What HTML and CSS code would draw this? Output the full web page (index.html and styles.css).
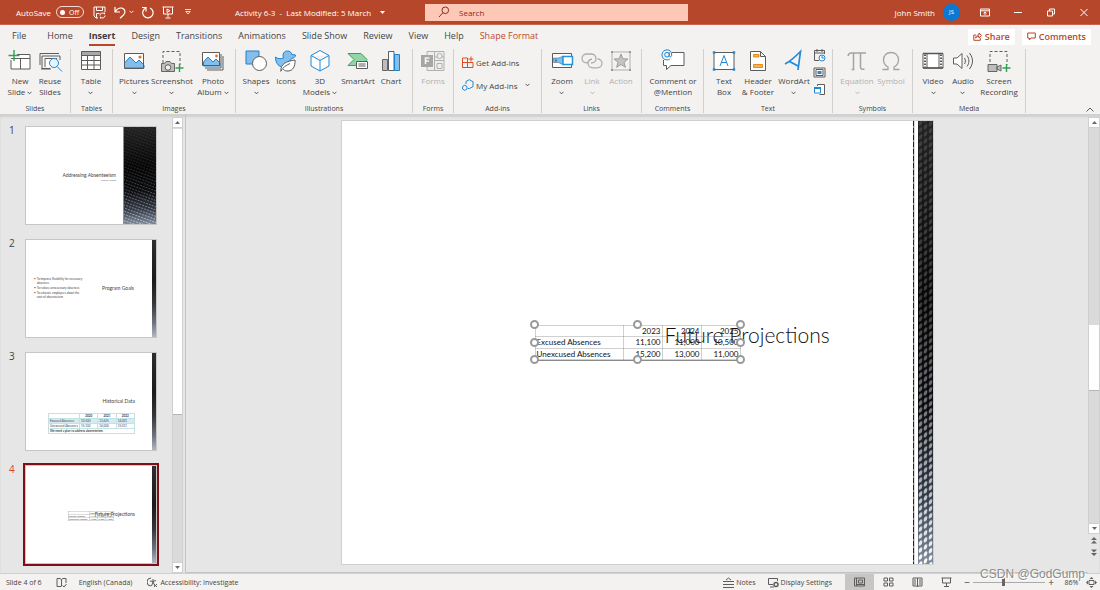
FILE: index.html
```html
<!DOCTYPE html>
<html lang="en">
<head>
<meta charset="utf-8">
<title>Activity 6-3 - PowerPoint</title>
<link rel="stylesheet" href="styles.css">
</head>
<body>
<svg class="defs" width="0" height="0" aria-hidden="true">
  <defs>
    <symbol id="chev" viewBox="0 0 5 4"><path d="M.5 .8 2.5 2.8 4.5 .8" fill="none" stroke="currentColor" stroke-width=".9"/></symbol>
    <linearGradient id="carbon" x1="0" y1="0" x2="0" y2="1">
      <stop offset="0" stop-color="#232323"/><stop offset=".4" stop-color="#060606"/><stop offset=".65" stop-color="#0a0b0e"/><stop offset=".85" stop-color="#343a45"/><stop offset="1" stop-color="#7c899b"/>
    </linearGradient>
    <linearGradient id="shine" x1="0" y1="0" x2="0" y2="1">
      <stop offset="0" stop-color="#404040"/><stop offset=".4" stop-color="#3a3a3a"/><stop offset=".65" stop-color="#77787c"/><stop offset=".85" stop-color="#c0c5ce"/><stop offset="1" stop-color="#fff"/>
    </linearGradient>
    <pattern id="dots" width="5" height="7" patternUnits="userSpaceOnUse" patternTransform="skewY(-32)">
      <ellipse cx="2.500" cy="3.500" rx="1.900" ry="2.500" fill="#fff"/>
    </pattern>
    <pattern id="fine" width="3" height="3" patternUnits="userSpaceOnUse" patternTransform="rotate(20)">
      <path d="M.3 1h1.600v.9H.3z" fill="#fff"/>
    </pattern>
    <mask id="dotMask" maskUnits="userSpaceOnUse" x="0" y="0" width="16" height="444"><rect width="16" height="444" fill="url(#dots)"/></mask>
    <mask id="fineMask" maskUnits="userSpaceOnUse" x="0" y="0" width="33" height="98"><rect width="33" height="98" fill="url(#fine)"/></mask>
  </defs>
</svg>

<header class="titlebar">
  <div class="quick">
    <label class="autosave">AutoSave<input type="checkbox" role="switch"><span class="switch"><i></i>Off</span></label>
    <button class="qa save" aria-label="Save"><svg width="13" height="13" viewBox="0 0 13 13"><path d="M5 12H3L1 10V1h11v5M3.500 1v3.500h6V1M3.500 12V7.500h3"/><path d="M7 9.500a2.500 2.500 0 0 1 4.500-1.500V6.500M12 9.500a2.500 2.500 0 0 1-4.500 1.500v1.500"/></svg></button>
    <button class="qa undo" aria-label="Undo"><svg width="12" height="13" viewBox="0 0 12 13"><path d="M1 1v5h5M1.200 5.700C3 3 5.500 1.500 8 2.200c3.500 1 3.800 4.600 1.500 6.800L6 12.300" stroke-width="1.200"/></svg></button>
    <button class="qa more" aria-label="Undo list"><svg width="5" height="4"><use href="#chev"/></svg></button>
    <button class="qa redo" aria-label="Redo"><svg width="13" height="13" viewBox="0 0 13 13"><path d="M1 1.500h4v4M4.800 2A5.200 5.200 0 1 0 9 2" stroke-width="1.200"/></svg></button>
    <button class="qa show" aria-label="Start slide show"><svg width="12" height="13" viewBox="0 0 12 13"><path d="M.5 1h11M1.500 1v7h9V1M6 8v3M3.500 12h5"/><path d="M5 3v3.500L8 4.700Z" fill="#fff"/></svg></button>
    <button class="qa cust" aria-label="Customize"><svg width="6" height="6" viewBox="0 0 6 6"><path d="M0 .5h6M.8 2.500h4.400L3 5Z" stroke-width=".8"/></svg></button>
  </div>
  <button class="doc">Activity 6-3&nbsp; -&nbsp; Last Modified: 5 March <svg width="5" height="3" viewBox="0 0 5 3"><path d="M0 0h5L2.500 3Z" fill="#fff"/></svg></button>
  <label class="search"><svg width="12" height="12" viewBox="0 0 12 12"><circle cx="7.300" cy="4.300" r="3.300"/><path d="M5 6.700 1 11"/></svg><input type="text" placeholder="Search" aria-label="Search"></label>
  <div class="account">
    <span>John Smith</span><span class="avatar">JS</span>
    <button class="win" aria-label="Ribbon options"><svg width="10" height="9" viewBox="0 0 10 9"><path d="M.5 1h9v7h-9ZM.5 2.800h9M5 7V4M3.500 5.300 5 3.900l1.500 1.400"/></svg></button>
    <button class="win" aria-label="Minimize"><svg width="8" height="9" viewBox="0 0 8 9"><path d="M0 4.500h8"/></svg></button>
    <button class="win" aria-label="Restore"><svg width="8" height="9" viewBox="0 0 8 9"><path d="M.5 3h5v5h-5ZM2.500 3V1h5v5h-2"/></svg></button>
    <button class="win" aria-label="Close"><svg width="8" height="9" viewBox="0 0 8 9"><path d="m.5 1 7 7M7.500 1l-7 7"/></svg></button>
  </div>
</header>

<nav class="tabs">
  <button class="file">File</button><button>Home</button><button class="active">Insert</button><button>Design</button><button>Transitions</button><button>Animations</button><button>Slide Show</button><button>Review</button><button>View</button><button>Help</button><button class="context">Shape Format</button>
  <div class="actions">
    <button><svg width="9" height="9" viewBox="0 0 9 9"><path d="M3 3H.8v5.300h6.500V6M2.500 6C3 4 4.200 3 6 3V1l2.500 2.500L6 6V4.500C4.500 4.500 3.500 5 2.500 6Z"/></svg>Share</button>
    <button><svg width="9" height="9" viewBox="0 0 9 9"><path d="M.7 1h7.600v5H4L2.300 8V6H.7Z"/></svg>Comments</button>
  </div>
</nav>

<section class="ribbon" aria-label="Insert">
  <div class="group g-slides"><div class="tools">
    <button class="tool"><svg width="24" height="24" viewBox="0 0 24 24"><path class="w" d="M3 5h19v15H3Z"/><path class="k" d="M9 5.500h13V20H3v-9M3 9.500h19M12.500 9.500V20"/><path class="gr" d="M6 1v11M.5 6.500h11"/></svg><span>New<br>Slide <svg class="c" width="5" height="4"><use href="#chev"/></svg></span></button>
    <button class="tool"><svg width="24" height="24" viewBox="0 0 24 24"><path class="k" d="M2 16V4.500h19M3 20h10M4 7h18v4M4 7v12.500h8"/><path class="w" d="M6 9h12v9H6z"/><path class="k" d="M7 18V9.500h12"/><circle cx="16" cy="14" r="4.500" style="fill:#e8f3fc" class="b"/><path class="b" d="m19 17.500 5 5"/></svg><span>Reuse<br>Slides</span></button>
  </div><h2>Slides</h2></div>
  <div class="group g-tables"><div class="tools">
    <button class="tool"><svg width="24" height="24" viewBox="0 0 24 24"><path class="w" d="M2 2h20v19H2Z"/><path d="M2 2h20v4H2Z" fill="#a8a8a8"/><path class="k" d="M2.500 2.500h19v18h-19ZM2 6.500h20M2 11.500h20M2 16h20M8.500 6v15M15 6v15"/></svg><span>Table<br><svg class="c" width="5" height="4"><use href="#chev"/></svg></span></button>
  </div><h2>Tables</h2></div>
  <div class="group g-images"><div class="tools">
    <button class="tool t32"><svg width="24" height="24" viewBox="0 0 24 24"><path class="w" d="M2 4h20v15H2Z"/><path class="bf" d="M2.500 14 8 8l6 6 3-3 5 5v3H2.500Z"/><path class="k" d="M2.500 4.500h19v15h-19Z"/><circle cx="18" cy="8" r="1.600" fill="#e8731a"/></svg><span>Pictures<br><svg class="c" width="5" height="4"><use href="#chev"/></svg></span></button>
    <button class="tool t44"><svg width="24" height="24" viewBox="0 0 24 24"><path class="k" d="M3 14V2.500h17V16" stroke-dasharray="3 2"/><path class="gy" d="M1.500 14.500h3l1.500-2h4l1.500 2h3v8h-13Z"/><circle class="k" cx="8" cy="18.500" r="2.800" style="fill:#eee"/><path class="gr" d="M19.500 15v8M15.500 19h8"/></svg><span>Screenshot<br><svg class="c" width="5" height="4"><use href="#chev"/></svg></span></button>
    <button class="tool t38"><svg width="24" height="24" viewBox="0 0 24 24"><path class="k" d="M6 21h16V7M4 19h16V5" /><path class="w" d="M2 4h17v13H2Z"/><path class="bf" d="M2.500 13 7 8l5 5 3-3 4 4v3H2.500Z"/><path class="k" d="M1.500 3.500h17v13h-17Z"/><circle cx="15.500" cy="7" r="1.400" fill="#e8731a"/></svg><span>Photo<br>Album <svg class="c" width="5" height="4"><use href="#chev"/></svg></span></button>
  </div><h2>Images</h2></div>
  <div class="group g-illus"><div class="tools">
    <button class="tool"><svg width="24" height="24" viewBox="0 0 24 24"><path class="bf" d="M2 2h13v13H2Z"/><circle class="k" cx="15.500" cy="14.500" r="7" style="fill:#fff"/></svg><span>Shapes<br><svg class="c" width="5" height="4"><use href="#chev"/></svg></span></button>
    <button class="tool"><svg width="24" height="24" viewBox="0 0 24 24"><path class="bf" d="M1.500 8c2 2 5 2 8 1C8 5 10 2 13.500 2c2.500 0 4 1.500 4.300 3.500L21.500 6c0 2-1.500 3-4 3.500L12 18H8C3.500 17 1.500 13 1.500 8Z"/><path class="k" d="M7 22c-1-7 6-10 14-11 .5 6-2 11.500-8 11-2 0-3-1-4-2M6.500 22.500C9 18 12 16.500 16 14.500" style="fill:#fff"/></svg><span>Icons</span></button>
    <button class="tool t38"><svg width="24" height="24" viewBox="0 0 24 24"><path class="b" d="m12 1.500 9 5V17l-9 5-9-5V6.500ZM3 6.500l9 5 9-5M12 11.500V22" style="fill:#fff"/></svg><span>3D<br>Models <svg class="c" width="5" height="4"><use href="#chev"/></svg></span></button>
    <button class="tool t38"><svg width="24" height="24" viewBox="0 0 24 24"><path d="M2 4.500h13l6 6-5 6H2l6-6Z" fill="#91d6a5" stroke="#35a260"/><path class="k" d="M10.500 12.500h11v7h-11Z" style="fill:#fff"/><path class="k" d="M12.500 15h7M12.500 17h7"/></svg><span>SmartArt</span></button>
    <button class="tool t28"><svg width="24" height="24" viewBox="0 0 24 24"><path class="gy" d="M3.500 10.500h5v11h-5Z"/><path class="k" d="M9.500 2.500h5.500v19H9.500Z" style="fill:#fff"/><path class="bf" d="M15.500 5.500h5v16h-5Z"/></svg><span>Chart</span></button>
  </div><h2>Illustrations</h2></div>
  <div class="group g-forms"><div class="tools">
    <button class="tool" disabled><svg width="24" height="24" viewBox="0 0 24 24"><path d="M6 2.500h17v19H6ZM14 8h9M14 11.500h9M13.500 2v19M16 14.500h5v5h-5z" fill="#eee" stroke="#b0b0b0"/><circle cx="18.500" cy="7" r="2.600" fill="#eee" stroke="#b0b0b0"/><path d="M0 6h12v12H0Z" fill="#a6a6a6"/><path d="M4.500 15V9H8.500M4.500 12h3.500" stroke="#f4f4f4" stroke-width="1.600" fill="none"/></svg><span>Forms</span></button>
  </div><h2>Forms</h2></div>
  <div class="group g-addins"><div class="tools list">
    <button class="row"><svg width="12" height="12" viewBox="0 0 12 12"><path d="M.5 2h5v9.500h-5ZM.5 6.500H11v5H.5M9 .5v5M6.500 3h5" fill="none" stroke="#dc4c22"/></svg>Get Add-ins</button>
    <button class="row"><svg width="12" height="12" viewBox="0 0 12 12"><path d="M4 5V2.500L7.300.7l3.700 2v5L7.300 9.500H6" class="b"/><path class="b" d="m2.800 6.200 2.200 1.300v2.500L2.800 11.400.6 10V7.500Z"/></svg>My Add-ins <svg class="c far" width="5" height="4"><use href="#chev"/></svg></button>
  </div><h2>Add-ins</h2></div>
  <div class="group g-links"><div class="tools">
    <button class="tool"><svg width="24" height="24" viewBox="0 0 24 24"><path class="w" d="M2.500 4.500h19v14h-19Z"/><path class="k" d="M2.500 4.500h19v14h-19Z"/><path d="M3.500 9h5l5-2v9l-5-2.500h-5Z" fill="#7ec0e8" stroke="#666" stroke-width=".6"/><path d="M13 7.500h9.500v8H13Z" fill="#fff" stroke="#2593d6" stroke-width="1.500"/><path d="M5 10.500h2v2H5z" fill="#1e86cc"/></svg><span>Zoom<br><svg class="c" width="5" height="4"><use href="#chev"/></svg></span></button>
    <button class="tool" disabled><svg width="24" height="24" viewBox="0 0 24 24"><path d="M8 14C4 14 2 12 2 9.500S4 5 7 5h4c3 0 5 2 5 4.500S14 14 11 14M12 10C9.500 10.500 8 12 8 14.300c0 2.500 2 4.500 5 4.500h4c3 0 5-2 5-4.500S20 10 17.500 10" fill="none" stroke="#adadad" stroke-width="1.300"/></svg><span>Link<br><svg class="c" width="5" height="4"><use href="#chev"/></svg></span></button>
    <button class="tool t28" disabled><svg width="24" height="24" viewBox="0 0 24 24"><path d="M3 3h18v18H3Z" fill="none" stroke="#b0b0b0"/><path d="M2 2h2v2H2zM20 2h2v2h-2zM2 20h2v2H2zM20 20h2v2h-2z" fill="#999"/><path d="m12 5 1.800 4.800 5.200.2-4 3.300 1.400 5L12 15.500l-4.400 2.800 1.400-5L5 10l5.200-.2Z" fill="#c4c4c4" stroke="#9c9c9c"/></svg><span>Action</span></button>
  </div><h2>Links</h2></div>
  <div class="group g-comments"><div class="tools">
    <button class="tool t54"><svg width="24" height="24" viewBox="0 0 24 24"><path class="k" d="M10 3.500h13v13H10l-4.500 4V16.500H2.500V11" style="fill:#fff"/><path d="M0 0h11v11H0z" fill="#f3f2f1"/><circle class="b" cx="6" cy="5.700" r="2.300"/><path class="b" d="M8.300 3.300v3.500c.2 1.500 2.200 1.300 2.400-.6C11 3 9 .8 6 .8 3.200.8 1 3 1 5.900s2 5 4.800 5c1.200 0 2-.2 3-.8"/></svg><span>Comment or<br>@Mention</span></button>
  </div><h2>Comments</h2></div>
  <div class="group g-text"><div class="tools">
    <button class="tool"><svg width="24" height="24" viewBox="0 0 24 24"><path class="k" d="M2 3.500h20v17H2Z" style="fill:#fff"/><path d="M.8 2.300h2.500v2.500H.8zM20.700 2.300h2.500v2.500h-2.500zM.8 19.200h2.500v2.500H.8zM20.700 19.200h2.500v2.500h-2.500z" fill="#2088d4"/><path class="b" d="m8 17 4-10.500L16 17M9.200 13.500h5.600"/></svg><span>Text<br>Box</span></button>
    <button class="tool t38"><svg width="24" height="24" viewBox="0 0 24 24"><path class="k" d="M4.500 2.500h10l5 5v14h-15ZM14.500 2.500v5h5" style="fill:#fff"/><path d="M7.500 5.500h5.500v2.500H7.500ZM7.500 15.500h9v3h-9Z" fill="#f7b45c" stroke="#ea8a16"/></svg><span>Header<br>&amp; Footer</span></button>
    <button class="tool t34"><svg width="24" height="24" viewBox="0 0 24 24"><path d="M3 15C9 12 14 7 18.500 2.500L16 21M7.500 12.500 17 17.500" fill="none" stroke="#2088d4" stroke-width="1.700"/></svg><span>WordArt<br><svg class="c" width="5" height="4"><use href="#chev"/></svg></span></button>
    <div class="mini">
      <button aria-label="Date &amp; Time"><svg width="13" height="13" viewBox="0 0 13 13"><path class="k" d="M6 11.500H1.500v-10h10V5M1 4h11M4 0v3M9 0v3"/><circle class="b" cx="9" cy="9" r="3" style="fill:#fff"/><path class="b" d="M9 7v2h2"/></svg></button>
      <button aria-label="Slide Number"><svg width="13" height="13" viewBox="0 0 13 13"><path class="k" d="M1 2h11v9H1Z"/><path class="k" d="M3 3.500h7v6H3Z" style="fill:#fff"/><path d="M4.500 5h4v3h-4z" fill="#2088d4"/></svg></button>
      <button aria-label="Object"><svg width="13" height="13" viewBox="0 0 13 13"><path class="k" d="M4.500 3V1.500h7v10h-5" style="fill:#fff"/><path class="b" d="M1.500 4.500h6v5.500h-6Z" style="fill:#fff"/><path d="M1 4h7v2H1z" fill="#2088d4"/></svg></button>
    </div>
  </div><h2>Text</h2></div>
  <div class="group g-symbols"><div class="tools">
    <button class="tool t38" disabled><svg width="24" height="24" viewBox="0 0 24 24"><path d="M3 7c.5-2 1.500-3 3-3h15M8.500 4v16.500M6.500 20.500h3M15.500 4v14c0 2 1.500 2.800 4 2" fill="none" stroke="#a3a3a3" stroke-width="1.500"/></svg><span>Equation<br><svg class="c" width="5" height="4"><use href="#chev"/></svg></span></button>
    <button class="tool" disabled><svg width="24" height="24" viewBox="0 0 24 24"><path d="M3.500 20.500H9V18C6 16.500 4.500 14 4.500 11 4.500 6.500 7.500 3.500 12 3.500s7.500 3 7.500 7.500c0 3-1.500 5.500-4.500 7v2.500h5.500" fill="none" stroke="#a3a3a3" stroke-width="1.300"/></svg><span>Symbol</span></button>
  </div><h2>Symbols</h2></div>
  <div class="group g-media"><div class="tools">
    <button class="tool"><svg width="24" height="24" viewBox="0 0 24 24"><path class="k" d="M2 4.500h20v14.500H2ZM6 4.500V19M18 4.500V19" style="fill:#fff"/><path class="k" d="M4 5.500v13M20 5.500v13" stroke-width="2" stroke-dasharray="1.500 1.500"/><path d="M2 4.500h20M2 19h20" stroke="#555" stroke-width="1.500"/></svg><span>Video<br><svg class="c" width="5" height="4"><use href="#chev"/></svg></span></button>
    <button class="tool"><svg width="24" height="24" viewBox="0 0 24 24"><path class="k" d="M2.500 9v6h3.500l5 4.500v-15L6 9Z" style="fill:#fff"/><path class="k" d="M13.500 9c1.200 2 1.200 4 0 6M16 6.500c2.500 3.500 2.500 7.500 0 11M18.500 4c4 5.500 4 10.500 0 16"/></svg><span>Audio<br><svg class="c" width="5" height="4"><use href="#chev"/></svg></span></button>
    <button class="tool t42"><svg width="24" height="24" viewBox="0 0 24 24"><path class="k" d="M3 13V2.500h17V16" stroke-dasharray="3 2"/><path class="gy" d="M1 15.500h9v7H1ZM10 18l4-2v6l-4-2Z"/><path class="gr" d="M19.500 15v8M15.500 19h8"/></svg><span>Screen<br>Recording</span></button>
  </div><h2>Media</h2></div>
  <button class="collapse" aria-label="Collapse ribbon"><svg width="8" height="5" viewBox="0 0 8 5"><path class="k" d="m.5 4.500 3.500-3.500 3.500 3.500"/></svg></button>
</section>

<main class="workspace">
  <aside class="panel">
    <ol class="thumbs">
      <li><span class="num">1</span><div class="thumb cover"><div class="body"><p class="t-title">Addressing Absenteeism</p><p class="t-sub">Program Meeting</p></div><svg class="cover-art" viewBox="0 0 33 98" preserveAspectRatio="none"><rect width="33" height="98" fill="url(#carbon)"/><rect width="33" height="98" fill="url(#shine)" mask="url(#fineMask)" opacity=".7"/><path d="M.5 0v98" stroke="#8a8f96"/></svg></div></li>
      <li><span class="num">2</span><div class="thumb goals"><ul><li>To improve flexibility for necessary absences</li><li>To reduce unnecessary absences</li><li>To educate employees about the cost of absenteeism</li></ul><p class="t-title">Program Goals</p><svg class="edge" viewBox="0 0 15 443" preserveAspectRatio="none"><rect width="15" height="443" fill="url(#carbon)"/><rect width="15" height="443" fill="url(#shine)" mask="url(#dotMask)"/></svg></div></li>
      <li><span class="num">3</span><div class="thumb history"><div class="body"><p class="t-title">Historical Data</p>
        <table><tr><th></th><th>2020</th><th>2021</th><th>2022</th></tr><tr class="band"><td>Excused Absences</td><td>10,500</td><td>13,625</td><td>14,001</td></tr><tr><td>Unexcused Absences</td><td>15,100</td><td>14,000</td><td>15,011</td></tr><tr><td colspan="4"><b>We need a plan to address absenteeism.</b></td></tr></table></div><svg class="edge" viewBox="0 0 15 443" preserveAspectRatio="none"><rect width="15" height="443" fill="url(#carbon)"/><rect width="15" height="443" fill="url(#shine)" mask="url(#dotMask)"/></svg></div></li>
      <li class="selected"><span class="num">4</span><div class="thumb future"><p class="t-title">Future Projections</p><table><tr><td></td><td>2023</td><td>2024</td><td>2025</td></tr><tr><td>Excused Absences</td><td>11,100</td><td>11,000</td><td>10,500</td></tr><tr><td>Unexcused Absences</td><td>15,200</td><td>13,000</td><td>11,000</td></tr></table><svg class="edge" viewBox="0 0 15 443" preserveAspectRatio="none"><rect width="15" height="443" fill="url(#carbon)"/><rect width="15" height="443" fill="url(#shine)" mask="url(#dotMask)"/></svg></div></li>
    </ol>
    <div class="scroll left">
      <button aria-label="Scroll up"><svg width="5" height="3" viewBox="0 0 5 3"><path d="M0 3h5L2.500 0Z"/></svg></button>
      <div class="track"><div class="grip"></div></div>
      <button aria-label="Scroll down"><svg width="5" height="3" viewBox="0 0 5 3"><path d="M0 0h5L2.500 3Z"/></svg></button>
    </div>
  </aside>
  <section class="stage">
    <article class="slide">
      <div class="canvas">
        <h1>Future Projections</h1>
        <div class="object">
          <table><tr><td></td><td>2023</td><td>2024</td><td>2025</td></tr><tr><td>Excused Absences</td><td>11,100</td><td>11,000</td><td>10,500</td></tr><tr><td>Unexcused Absences</td><td>15,200</td><td>13,000</td><td>11,000</td></tr></table>
          <i class="h nw"></i><i class="h n"></i><i class="h ne"></i><i class="h w1"></i><i class="h e"></i><i class="h sw"></i><i class="h s"></i><i class="h se"></i>
        </div>
      </div>
      <div class="rule"></div>
      <svg class="strip" viewBox="0 0 15 443" preserveAspectRatio="none"><rect width="15" height="443" fill="url(#carbon)"/><rect width="15" height="443" fill="url(#shine)" mask="url(#dotMask)"/></svg>
    </article>
  </section>
  <div class="scroll right">
    <button aria-label="Scroll up"><svg width="5" height="3" viewBox="0 0 5 3"><path d="M0 3h5L2.500 0Z"/></svg></button>
    <div class="track"><div class="grip"></div></div>
    <button aria-label="Scroll down"><svg width="5" height="3" viewBox="0 0 5 3"><path d="M0 0h5L2.500 3Z"/></svg></button>
    <button class="jump" aria-label="Previous slide"><svg width="6" height="7" viewBox="0 0 6 7"><path d="M0 3h6L3 0ZM0 6.500h6L3 3.500Z"/></svg></button>
    <button class="jump" aria-label="Next slide"><svg width="6" height="7" viewBox="0 0 6 7"><path d="M0 .5h6L3 3.500ZM0 4h6L3 7Z"/></svg></button>
  </div>
</main>

<footer class="status">
  <span>Slide 4 of 6</span>
  <button class="book" aria-label="Spelling"><svg width="11" height="11" viewBox="0 0 11 11"><path class="k" d="M5 9.500H1v-8h3l1.500 1L7 1.500h3V6M5.500 2.500v7M6.500 8.500 8 10l2.500-3"/></svg></button>
  <button>English (Canada)</button>
  <button class="access"><svg width="11" height="11" viewBox="0 0 11 11"><path class="k" d="M4 1a4 4 0 0 0 0 8M3 4l3 .5 3-1M6 2v3L4.500 9M6 5l2 4M7 7l3 3M10 7 7 10"/></svg>Accessibility: Investigate</button>
  <div class="tools-right">
    <button class="notes"><svg width="11" height="11" viewBox="0 0 11 11"><path class="k" d="M0 4.500h11M0 7.500h11M0 10.500h11M3 3l2.500-2L8 3"/></svg>Notes</button>
    <button class="display"><svg width="11" height="11" viewBox="0 0 11 11"><path class="k" d="M5 7.500H.5v-6h9V4M2 10h4"/><circle class="k" cx="8" cy="7.500" r="2" stroke-width="1.500"/></svg>Display Settings</button>
    <button class="view on" aria-label="Normal"><svg width="11" height="10" viewBox="0 0 11 10"><path class="k" d="M.5 1h10v8H.5ZM2.500 1v8M4.500 3h4v3h-4ZM3 7.500h7"/></svg></button>
    <button class="view" aria-label="Slide sorter"><svg width="11" height="10" viewBox="0 0 11 10"><path class="k" d="M1 1h3.500v3H1ZM6.500 1H10v3H6.500ZM1 6h3.500v3H1ZM6.500 6H10v3H6.500Z"/></svg></button>
    <button class="view" aria-label="Reading view"><svg width="11" height="10" viewBox="0 0 11 10"><path class="k" d="M1 1h9v8H1ZM5.500 1v9M2 3h2M2 5h2M2 7h2M7 3h2M7 5h2M7 7h2"/></svg></button>
    <button class="view" aria-label="Slide show"><svg width="11" height="10" viewBox="0 0 11 10"><path class="k" d="M.5 1h10M1.500 1v5h8V1M5.500 6v3M3 9.500h5"/></svg></button>
    <button class="zoom-btn" aria-label="Zoom out">−</button>
    <input type="range" min="10" max="190" value="86" aria-label="Zoom">
    <button class="zoom-btn" aria-label="Zoom in">+</button>
    <span class="pct">86%</span>
    <button class="fit" aria-label="Fit to window"><svg width="11" height="11" viewBox="0 0 11 11"><path class="k" d="M3 3.500h5v4H3Z"/><path class="kf" d="m5.500 0 2 2h-4ZM5.500 11l2-2h-4ZM0 5.500l2-2v4ZM11 5.500l-2-2v4Z"/></svg></button>
  </div>
  <div class="watermark">CSDN @GodGump</div>
</footer>
</body>
</html>
```
FILE: styles.css
```css
* { box-sizing: border-box; }
body {
  margin: 0;
  height: 100vh;
  display: flex;
  flex-direction: column;
  overflow: hidden;
  background: #e6e6e6;
  color: #444;
  font: 8px/11px "Open Sans", "Noto Sans", sans-serif;
}
button { font: inherit; color: inherit; background: none; border: 0; padding: 0; margin: 0; }
svg { display: block; flex: none; }
h1, h2, p, ol, ul { margin: 0; padding: 0; font-weight: 400; }
.defs { position: absolute; }
.k { fill: none; stroke: #5c5c5c; }
.kf { fill: #5c5c5c; }
.b { fill: none; stroke: #2088d4; }
.bf { fill: #83beec; stroke: #2080c8; }
.gr { fill: none; stroke: #2fa14f; stroke-width: 1.400; }
.gy { fill: #bdbdbd; stroke: #666; }
.w { fill: #fff; }

/* title bar */
.titlebar { flex: none; height: 25px; display: flex; align-items: center; background: #b7472a; color: #fff; border-bottom: 1px solid #c8674d; }
.quick { width: 235px; padding-left: 16px; display: flex; align-items: center; }
.autosave { display: flex; align-items: center; gap: 5px; }
.autosave input { position: absolute; opacity: 0; }
.switch { width: 28px; height: 12px; border: 1px solid #f3d9d1; border-radius: 6px; display: flex; align-items: center; gap: 4px; padding-left: 3px; font-size: 7px; }
.switch i { width: 5px; height: 5px; border-radius: 50%; background: #fff; }
.qa svg path { fill: none; stroke: #fff; }
.save { margin-left: 9px; }
.undo { margin-left: 8px; }
.more { margin-left: 3px; }
.redo { margin-left: 7px; }
.show { margin-left: 8px; }
.cust { margin-left: 11px; }
.doc { width: 190px; display: flex; align-items: center; gap: 9px; white-space: nowrap; }
.search { width: 263px; height: 17px; display: flex; align-items: center; gap: 9px; padding-left: 13px; background: #fdc8b5; }
.search svg { fill: none; stroke: #8a2b23; }
.search input { flex: 1; min-width: 0; border: 0; padding: 0; background: none; font: inherit; color: #8a2b23; outline: 0; }
.search input::placeholder { color: #8a2b23; opacity: 1; }
.account { margin-left: auto; display: flex; align-items: center; }
.avatar { width: 17px; height: 17px; margin: 0 8px; border-radius: 50%; background: #0b78d4; font-size: 6px; line-height: 17px; text-align: center; }
.win { width: 33px; display: flex; justify-content: center; }
.win svg { fill: none; stroke: #fff; }

/* tabs */
.tabs { flex: none; height: 22px; padding: 1px 9px 0 12px; display: flex; align-items: center; gap: 16px; background: #f3f2f1; font-size: 9px; white-space: nowrap; }
.tabs > button { height: 19px; border-bottom: 2px solid transparent; line-height: 18px; }
.tabs > .file { margin-right: 5px; }
.tabs > .active { font-weight: 700; border-color: #b7472a; color: #3b3b3b; }
.tabs > .context { color: #c04a2b; }
.actions { margin-left: auto; display: flex; gap: 7px; }
.actions button { height: 16px; padding: 0 5px; display: flex; align-items: center; gap: 3px; background: #fff; color: #b7472a; font-size: 9px; font-weight: 600; }
.actions svg { fill: none; stroke: #b7472a; }

/* ribbon */
.ribbon { flex: none; height: 68px; display: flex; padding: 2px 0; background: #f3f2f1; border-bottom: 1px solid #d0d0d0; }
.group { height: 64px; display: flex; flex-direction: column; justify-content: space-between; border-right: 1px solid #d2d0ce; }
.group h2 { font-size: 7px; line-height: 8px; text-align: center; }
.tools { display: flex; padding-left: 5px; }
.tool { width: 30px; display: flex; flex-direction: column; align-items: center; white-space: nowrap; }
.tool > svg { overflow: visible; }
.tool span { margin-top: 2px; }
.t28 { width: 28px; } .t32 { width: 32px; } .t34 { width: 34px; } .t38 { width: 38px; } .t42 { width: 42px; } .t44 { width: 44px; } .t54 { width: 54px; }
.tool:disabled { color: #b1b0af; }
.c { display: inline-block; vertical-align: middle; }
.g-slides { width: 71px; }
.g-tables { width: 42px; }
.g-images { width: 123px; }
.g-illus { width: 177px; }
.g-forms { width: 41px; }
.g-addins { width: 88px; }
.g-links { width: 100px; }
.g-comments { width: 62px; }
.g-comments .tools { padding-left: 4px; }
.g-text { width: 129px; }
.g-symbols { width: 80px; }
.g-media { width: 113px; }
.list { flex-direction: column; gap: 11px; padding: 7px 0 0 8px; }
.row { display: flex; align-items: center; gap: 2px; height: 12px; }
.far { margin-left: 6px; }
.mini { display: flex; flex-direction: column; gap: 4px; padding-left: 2px; }
.collapse { margin: auto 6px 0 auto; }

/* workspace */
.workspace { flex: 1; min-height: 0; display: flex; background: #e6e6e6; box-shadow: inset 0 2px 2px #d0d0d0; }
.panel { width: 186px; display: flex; border-right: 1px solid #c3c3c3; }
.thumbs { flex: 1; padding: 11px 0 0 9px; list-style: none; display: flex; flex-direction: column; gap: 14px; }
.thumbs > li { display: flex; }
.num { width: 16px; font: 10px/9px "Open Sans", sans-serif; }
.thumb { position: relative; width: 132px; height: 99px; display: flex; background: #fff; border: 1px solid #c6c6c6; color: #444; font-family: Lato, sans-serif; overflow: hidden; }
.selected .num { color: #d24726; }
.selected .thumb { outline: 2px solid #7f0f17; }
.t-title { font-size: 5px; line-height: 6px; white-space: nowrap; }
.t-sub { font-size: 2px; line-height: 5px; color: #667; }
.cover .body { flex: 1; padding: 45px 7px 0 0; text-align: right; }
.cover-art { width: 33px; height: 97px; }
.edge { position: absolute; right: 0; top: 0; width: 4px; height: 97px; }
.goals { padding: 37px 22px 0 8px; justify-content: space-between; }
.goals ul { width: 51px; list-style: none; font-size: 3px; line-height: 4px; }
.goals li { display: flex; gap: 1px; margin-bottom: 1px; }
.goals li::before { content: "•"; }
.goals .t-title { margin-top: 8px; }
.history .body { flex: 1; padding: 45px 21px 0; display: flex; flex-direction: column; align-items: flex-end; gap: 9px; }
.history table { width: 87px; table-layout: fixed; border-collapse: collapse; font-size: 3px; line-height: 4px; }
.history th:first-child { width: 31px; }
.history td, .history th { padding: 0 1px; border: 1px solid #c4e2e6; height: 5px; white-space: nowrap; }
.history .band { background: #d6ebee; }
.future .t-title { position: absolute; right: 21px; top: 45px; }
.future table { position: absolute; left: 42px; top: 45px; width: 46px; height: 8px; border-collapse: collapse; font-size: 2px; line-height: 2px; }
.future td { padding: 0; border: 1px solid rgba(120, 120, 120, .25); }

.scroll { width: 12px; margin-top: 2px; display: flex; flex-direction: column; }
.scroll button { height: 11px; background: #fff; border: 1px solid #cfcfcf; display: flex; align-items: center; justify-content: center; }
.scroll svg { fill: #666; }
.track { flex: 1; padding-top: 1px; background: #dadada; border: solid #cfcfcf; border-width: 0 1px; }
.grip { background: #fff; border-bottom: 1px solid #b5b5b5; }
.left { margin-right: 2px; width: 11px; }
.left .grip { height: 66%; }
.right .track { padding-top: 197px; }
.right .grip { height: 66px; }
.scroll .jump { background: none; border: 0; height: 12px; }
.right { padding-bottom: 15px; }
.stage { flex: 1; min-width: 0; display: flex; align-items: center; justify-content: center; border-bottom: 1px solid #c3c3c3; padding-bottom: 2px; }
.slide { width: 591px; height: 443px; display: flex; background: #fff; box-shadow: 0 0 0 1px #d0d0d0; }
.canvas { position: relative; flex: 1; }
.rule { width: 1px; margin-right: 4px; background: repeating-linear-gradient(#222 0 5px, #888 5px 7px); box-shadow: 1px 0 #ddd; }
.strip { width: 15px; height: 100%; }
h1 { position: absolute; left: 323px; top: 201px; font: 300 21px/26px Lato, sans-serif; color: #111; white-space: nowrap; }
.object { position: absolute; left: 193px; top: 204px; width: 206px; height: 36px; border-bottom: 1px solid #8a8a8a; }
.object table { width: 100%; height: 100%; border-collapse: collapse; table-layout: fixed; font: 8px/10px Lato, sans-serif; color: #111; }
.object td { padding: 0 1px; border: 1px solid rgba(120, 120, 120, .35); text-align: right; white-space: nowrap; }
.object td:first-child { width: 88px; text-align: left; }
.h { position: absolute; width: 9px; height: 9px; margin: -5px; border: 2px solid #9a9a9a; border-radius: 50%; background: #fff; }
.nw, .n, .ne { top: 0; }
.w1, .e { top: 50%; }
.sw, .s, .se { top: 100%; }
.nw, .w1, .sw { left: 0; }
.n, .s { left: 50%; }
.ne, .e, .se { left: 100%; }

/* status bar */
.status { position: relative; flex: none; height: 17px; padding: 0 3px 0 6px; display: flex; align-items: center; background: #f3f2f1; border-top: 1px solid #d0d0d0; font-size: 7px; white-space: nowrap; }
.book { margin: 0 12px 0 14px; }
.access, .notes, .display { display: flex; align-items: center; gap: 2px; }
.access { margin-left: 15px; }
.tools-right { margin-left: auto; display: flex; align-items: center; }
.display { margin: 0 13px 0 12px; }
.view { width: 29px; height: 16px; display: flex; align-items: center; justify-content: center; }
.on { background: #c8c6c4; }
.zoom-btn { width: 12px; font-size: 10px; }
.status input { appearance: none; width: 72px; height: 12px; margin: 0; background: linear-gradient(#aaa, #aaa) center / 100% 1px no-repeat; }
.status input::-webkit-slider-thumb { appearance: none; width: 3px; height: 8px; background: #666; }
.pct { width: 29px; text-align: center; }
.watermark { position: absolute; right: 15px; top: -8px; font: 12px/16px "Liberation Sans", Arial, sans-serif; color: #8c8c8c; text-shadow: 1px 1px 0 #fff; }
```
